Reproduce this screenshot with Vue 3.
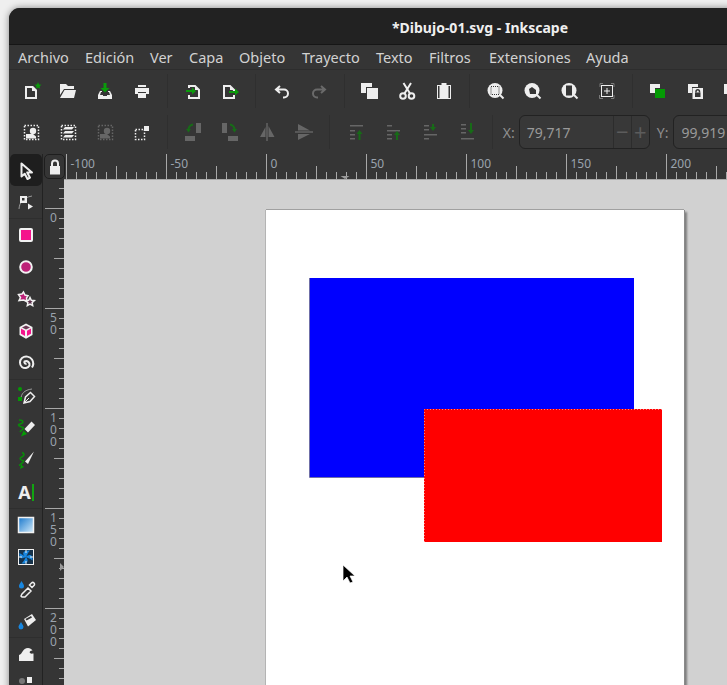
<template>
  <div class="screen">
    <div class="ventana">
      <header class="titulo">*Dibujo-01.svg - Inkscape</header>

      <nav class="menu">
        <span v-for="m in menus" :key="m">{{ m }}</span>
      </nav>

      <!-- barra de comandos -->
      <div class="barra barra-comandos">
        <button class="btn"><svg viewBox="0 0 24 24"><path class="ln" d="M7 8h6l4 4v7H7z"/><path class="bl" d="M13 7h1l4 4v1h-5z"/><path class="gr" d="M19 3l1 2.500 2.500.2-2 1.600.7 2.500-2.200-1.400-2.200 1.400.7-2.500-2-1.600 2.500-.2z"/></svg></button>
        <button class="btn"><svg viewBox="0 0 24 24"><path class="bl" d="M4 5h6l2 2h6v3H8l-4 6z"/><path class="bl" d="M8.500 11H20l-2 8H4z"/></svg></button>
        <button class="btn"><svg viewBox="0 0 24 24"><path class="gr" d="M10.500 4h3v5h3L12 13.500 7.500 9h3z"/><path class="bl" d="M5 16l2-4h2v1H8l-1 3h3v1h4v-1h3l-1-3h-1v-1h2l2 4v4H5z"/></svg></button>
        <button class="btn"><svg viewBox="0 0 24 24"><path class="bl" d="M8 6h8v2H8zM5 9h14v6h-3v-2H8v2H5z"/><path class="bl" d="M8 14h8v5H8z"/></svg></button>
        <i class="sep"></i>
        <button class="btn"><svg viewBox="0 0 24 24"><path class="ln" d="M8 9V7h6l4 4v8H8v-3"/><path class="bl" d="M14 7l4 4h-4z"/><path class="gr" d="M5 11h6V8.500l4 3.500-4 3.500V13H5z"/></svg></button>
        <button class="btn"><svg viewBox="0 0 24 24"><path class="ln" d="M16 12v-1l-4-4H6v12h10v-3"/><path class="bl" d="M12 7l4 4h-4z"/><path class="gr" d="M11 12h6V9.500l4 3.500-4 3.500V14h-6z"/></svg></button>
        <i class="sep"></i>
        <button class="btn"><svg viewBox="0 0 24 24"><path class="ln" d="M10 7l-4 3.500 4 3.500M6.500 10.500H14a4 4 0 0 1 0 8h-1"/></svg></button>
        <button class="btn"><svg viewBox="0 0 24 24"><path class="ln off" d="M14 7l4 3.500-4 3.500M17.500 10.500H10a4 4 0 0 0 0 8h1"/></svg></button>
        <i class="sep"></i>
        <button class="btn"><svg viewBox="0 0 24 24"><path class="bl" d="M3 4h11v4H8v6H3z"/><path class="bl" d="M9 9h11v11H9z"/></svg></button>
        <button class="btn"><svg viewBox="0 0 24 24"><circle class="ln" cx="8" cy="17" r="2.800"/><circle class="ln" cx="16.500" cy="17" r="2.800"/><path class="ln" d="M9.500 14.500L16 4M15 14.500L8.500 4"/></svg></button>
        <button class="btn"><svg viewBox="0 0 24 24"><rect class="ln fino" x="5.500" y="6.500" width="13" height="13"/><path class="bl" d="M9.500 4h5v2H16.500v13h-9V6h2z"/></svg></button>
        <i class="sep"></i>
        <button class="btn"><svg viewBox="0 0 24 24"><path class="ln" d="M16 16l3.500 3.500"/><circle class="bl" cx="11" cy="11.500" r="7.500"/><rect class="punt" x="7" y="7.500" width="8" height="8"/></svg></button>
        <button class="btn"><svg viewBox="0 0 24 24"><path class="ln" d="M16 16l3.500 3.500"/><circle class="bl" cx="11" cy="11.500" r="7.500"/><path class="hueco" d="M8 10l3-2 4 3v4H9z"/></svg></button>
        <button class="btn"><svg viewBox="0 0 24 24"><path class="ln" d="M16 16l3.500 3.500"/><circle class="bl" cx="11" cy="11.500" r="7.500"/><rect class="hueco" x="8" y="6.500" width="6" height="10"/></svg></button>
        <button class="btn"><svg viewBox="0 0 24 24"><path class="fino gris" d="M5 8V4.500h3M16 4.500h3V8M19 16v3.500h-3M8 19.500H4.500V16"/><rect class="ln fino" x="6.500" y="6.500" width="11" height="11"/><path class="ln fino" d="M9 12h6M12 9v6"/></svg></button>
        <i class="sep"></i>
        <button class="btn"><svg viewBox="0 0 24 24"><path class="bl" d="M4 5h10v4H9v5H4z"/><path class="ve" d="M9 10h10v9H9z"/></svg></button>
        <button class="btn"><svg viewBox="0 0 24 24"><path class="bl" d="M5 5h10v3H9v6H5z"/><path class="bl" d="M9.500 9H20v11H9.500z"/><path class="hueco" d="M12 13.500h5.500V18H12z"/><path class="cand" d="M13 13.500v-1a1.700 1.700 0 0 1 3.500 0v1"/></svg></button>
        <button class="btn"><svg viewBox="0 0 24 24"><path class="bl" d="M4 5h10v10H4z"/></svg></button>
      </div>

      <!-- barra de controles del selector -->
      <div class="barra barra-controles">
        <button class="btn"><svg viewBox="0 0 24 24"><rect class="punt bla" x="5.500" y="5.500" width="14" height="14"/><circle class="bl" cx="14" cy="11" r="3.200"/><path class="bl" d="M7 14h7l3 2.500v2H7z"/></svg></button>
        <button class="btn"><svg viewBox="0 0 24 24"><rect class="punt bla" x="5.500" y="5.500" width="14" height="14"/><path class="bl" d="M9 7h9l-2 2.500H7zM9 11h9l-2 2.500H7zM9 15h9l-2 2.500H7z"/></svg></button>
        <button class="btn"><svg viewBox="0 0 24 24"><rect class="punt tenue" x="5.500" y="5.500" width="14" height="14"/><circle class="of" cx="14" cy="11" r="3.200"/><path class="of" d="M7 14h7l3 2.500v2H7z"/></svg></button>
        <button class="btn"><svg viewBox="0 0 24 24"><rect class="punt bla" x="5.500" y="9.500" width="9" height="10"/><path class="bl" d="M14 6h5v5h-5z"/></svg></button>
        <i class="sep"></i>
        <button class="btn"><svg viewBox="0 0 24 24"><path class="of" d="M4 16h10v5H4zM15 3h5v10h-5z"/><path class="vo" d="M12 4.500A5 5 0 0 0 7.500 10"/><path class="vd" d="M5 9h5l-2.500 3.500z"/></svg></button>
        <button class="btn"><svg viewBox="0 0 24 24"><path class="of" d="M10 16h10v5H10zM4 3h5v10H4z"/><path class="vo" d="M12 4.500A5 5 0 0 1 16.500 10"/><path class="vd" d="M14 9h5l-2.500 3.500z"/></svg></button>
        <button class="btn"><svg viewBox="0 0 24 24"><path class="of" d="M10.500 7v10H5zM13.500 6l6 11h-6z"/><path class="fino gris" d="M12 3v18"/></svg></button>
        <button class="btn"><svg viewBox="0 0 24 24"><path class="of" d="M6 4l12 6.500H6zM6 14h12L6 20z"/><path class="fino gris" d="M3 12h18"/></svg></button>
        <i class="sep"></i>
        <button class="btn" v-for="a in alineados" :key="a.flecha"><svg viewBox="0 0 24 24"><path class="of" :d="a.lineas"/><path class="vd" :d="a.flecha"/></svg></button>
        <i class="sep sep-ultima"></i>
        <label class="campo-label">X:</label>
        <div class="spin">
          <span class="spin-valor">79,717</span>
          <span class="spin-boton">−</span>
          <span class="spin-boton">+</span>
        </div>
        <label class="campo-label campo-y">Y:</label>
        <div class="spin spin-y">
          <span class="spin-valor">99,919</span>
        </div>
      </div>

      <div class="cuerpo">
        <!-- caja de herramientas -->
        <aside class="herramientas">
          <button class="tool activa"><svg viewBox="0 0 24 24"><path class="flecha" d="M7.500 5.500v13l3.200-2.800 2.800 5.300 2.500-1.300-2.800-5.200H18z"/></svg></button>
          <button class="tool"><svg viewBox="0 0 24 24"><path class="fino gris2" d="M5 19c.5-6 3-11 13-13"/><path class="bl" d="M6 6h7v7H6z"/><path class="hueco" d="M8 8h2.500v2.500H8z"/><path class="bl" d="M14 13.500l5 3-5 3z"/></svg></button>
          <i class="tool-sep"></i>
          <button class="tool"><svg viewBox="0 0 24 24"><rect class="rosa" x="6" y="6" width="12" height="12" rx="1"/></svg></button>
          <button class="tool"><svg viewBox="0 0 24 24"><circle class="magenta" cx="12" cy="12" r="5.800"/></svg></button>
          <button class="tool"><svg viewBox="0 0 24 24"><path class="magenta fino2" d="M9.500 5l1.500 3 3 .8-1.500 2.200.5 3.500-3.500-1.500-4.500.5 1.500-3-2-3 3.500-.5z"/><path class="estrella" d="M16 10.500l1.300 2.800 3 .3-2.200 2 .6 3-2.700-1.500-2.700 1.500.6-3-2.200-2 3-.3z"/></svg></button>
          <button class="tool"><svg viewBox="0 0 24 24"><path class="cubo" d="M12 4.500l6.500 3.500v8L12 19.800 5.500 16V8z"/><path class="rosa2" d="M7 9.500l4 2.300V17l-4-2.300z"/><path class="rosa2" d="M17 9.500l-4 2.300V17l4-2.300z"/><path class="oscuro" d="M12 6.500L16 8.500 12 10.500 8 8.500z"/></svg></button>
          <button class="tool"><svg viewBox="0 0 24 24"><path class="ln" d="M12.500 12.500a1.500 1.500 0 0 1-2-2 3.500 3.500 0 0 1 5 4 5 5 0 0 1-7.500 1.500A6 6 0 0 1 8 7a7 7 0 0 1 10 1.500 7.500 7.500 0 0 1 0 8"/></svg></button>
          <i class="tool-sep"></i>
          <button class="tool"><svg viewBox="0 0 24 24"><path class="fino gris2" d="M7 15c0-5 3-9 11-10"/><circle class="ve" cx="6" cy="5" r="2"/><path class="ve" d="M4 13h4v4H4z"/><path class="pluma" d="M10 19l1.500-6 5-4.500 4 4-4.500 5z"/><path class="fino bl-l" d="M10.500 18.500L15 14"/></svg></button>
          <button class="tool"><svg viewBox="0 0 24 24"><path class="vo2" d="M5 4c5 0 5 3 1 4s1 3 3 3.500-2 3-3 4.500"/><path class="bl" d="M10.500 13l7-7.500 3.500 3.500-7 7.500z"/><path class="ve" d="M9.500 14.500l3.500 3.500-6 2.500z"/></svg></button>
          <button class="tool"><svg viewBox="0 0 24 24"><path class="vo2" d="M8 4.500c4 2 1 4-1 5s0 3 2 3-2 4-4 5"/><path class="bl" d="M11 13.500L20 3.500l-6 12.500z"/><path class="ve" d="M7 16.500l3 2.500-4 2z"/></svg></button>
          <button class="tool tool-texto"><span class="letra">A</span><i class="caret"></i></button>
          <i class="tool-sep"></i>
          <button class="tool"><svg viewBox="0 0 24 24"><defs><linearGradient id="degradado" x1="0" y1="0" x2="1" y2="1"><stop offset="0" stop-color="#1877cc"/><stop offset="1" stop-color="#d4ecfa"/></linearGradient></defs><rect class="marco" x="4.500" y="4.500" width="15" height="15" fill="url(#degradado)"/></svg></button>
          <button class="tool"><svg viewBox="0 0 24 24"><rect class="marcoM" x="4.500" y="4.500" width="15" height="15"/><path class="azul" d="M12 12C7 9 9 5 16 5.500c-2 2-3 4.500-4 6.500zM12 12c3-3 7-3 6.500 3.500-2-2-4.500-2.500-6.500-3.500zM12 12c3 4 2 7-4.500 6.500 2-2 3.500-4.500 4.500-6.500zM12 12c-4 2-7 2-6.500-4 2 1 4.500 3 6.500 4z"/><path class="fino bl-l" d="M12 4.500V8M12 16v3.500M4.500 12H8M16 12h3.500"/></svg></button>
          <button class="tool"><svg viewBox="0 0 24 24"><path class="azul" d="M7.500 4c1.500 2.500 2.500 3.500 2.500 5a2.500 2.500 0 0 1-5 0c0-1.500 1-2.500 2.500-5z"/><path class="gotero" d="M8 20l-1-1 1-2 6-6 3 3-6 6zM15.500 8l2-2a1.500 1.500 0 0 1 2.500 2.500l-2 2z"/></svg></button>
          <button class="tool"><svg viewBox="0 0 24 24"><path class="azul" d="M7 13c1.500 2.500 2.500 3.500 2.500 5a2.500 2.500 0 0 1-5 0c0-1.500 1-2.500 2.500-5z"/><path class="bl" d="M10 10l8-5 4 6-8 6.500z"/><path class="hueco" d="M11.500 10l5.500-3 1 1.500-5.500 3z"/></svg></button>
          <i class="tool-sep"></i>
          <button class="tool"><svg viewBox="0 0 24 24"><path class="bl" d="M5 13c3.500-.5 3.500-7 9-7 2 0 3.500 1 4.500 2.500-2.500 0-3.500 1.500-2.500 2.500s2.500.5 3.500.5v7.500H5z"/></svg></button>
          <button class="tool"><svg viewBox="0 0 24 24"><circle class="gris3" cx="8" cy="7" r="3"/><path class="bl" d="M13 3h5v6h-5z"/></svg></button>
        </aside>

        <div class="trabajo">
          <!-- reglas -->
          <div class="reglas-top">
            <div class="candado"><svg viewBox="0 0 16 20"><path class="cand2" d="M5 9V6.500a3 3 0 0 1 6 0V9"/><path class="bl" d="M3 9h10v8.500H3z"/></svg></div>
            <svg class="regla-h" width="663" height="25">
              <path class="regla-linea" :d="marcasH"/>
              <text v-for="t in etiquetasH" :key="t.n" class="regla-txt" :x="t.x" y="14">{{ t.n }}</text>
              <path class="regla-marca" d="M281 25l4.500-3h-9z"/>
            </svg>
          </div>
          <div class="zona">
            <svg class="regla-v" width="21" height="506">
              <path class="regla-linea" :d="marcasV"/>
              <template v-for="t in etiquetasV" :key="t.y">
                <text v-for="(d, i) in t.n" :key="i" class="regla-txt" x="7" :y="t.y + 14 + i * 12">{{ d }}</text>
              </template>
              <path class="regla-marca" d="M21 388l-4-4v8z"/>
            </svg>
            <main class="lienzo">
              <div class="pagina">
                <svg width="418" height="480">
                  <rect x="43" y="68" width="325" height="199" fill="#0000ff"/>
                  <path d="M43.500 68V267.500H158" fill="none" stroke="#6f6fa8"/>
                  <rect x="158" y="199" width="238" height="133" fill="#ff0000"/>
                  <path d="M158.500 332V199.500H396" fill="none" stroke="#ff7f7f" stroke-dasharray="1 2"/>
                </svg>
              </div>
              <svg class="cursor" width="16" height="22" viewBox="0 0 16 22"><path d="M2 1v16l4-4 3 6 3-1-3-6h5z" fill="#000" stroke="#fff" stroke-opacity=".7"/></svg>
            </main>
          </div>
        </div>
      </div>
    </div>
  </div>
</template>

<script setup>
const menus = ["Archivo", "Edición", "Ver", "Capa", "Objeto", "Trayecto", "Texto", "Filtros", "Extensiones", "Ayuda"];

const alineados = [
  { lineas: "M6 5h13v1.500H6zM6 10h5v1.500H6zM6 14h5v1.500H6zM6 18h5v1.500H6z", flecha: "M14.500 20v-6h-2l3-4 3 4h-2v6z" },
  { lineas: "M6 5h5v1.500H6zM6 10h13v1.500H6zM6 14h5v1.500H6zM6 18h5v1.500H6z", flecha: "M15 20v-5h-2l3-4 3 4h-2v5z" },
  { lineas: "M6 5h5v1.500H6zM6 9h5v1.500H6zM6 14h13v1.500H6zM6 18h5v1.500H6z", flecha: "M14 4h2v3h2l-3 4-3-4h2z" },
  { lineas: "M6 4h5v1.500H6zM6 8h5v1.500H6zM6 12h5v1.500H6zM6 18h13v1.500H6z", flecha: "M15 3h2v7h2l-3 4-3-4h2z" },
];

// regla horizontal: 2px por unidad, marca cada 10px
const origenH = 2.5;
let h = "";
for (let i = 0; i * 10 + origenH < 663; i++) {
  const x = i * 10 + origenH;
  const largo = i % 10 === 0 ? 25 : i % 5 === 0 ? 13 : 7;
  h += `M${x} ${25 - largo}V25`;
}
const marcasH = h;
const etiquetasH = [-100, -50, 0, 50, 100, 150, 200].map((n, i) => ({ n: String(n), x: origenH + i * 100 + 4 }));

// regla vertical
let v = "";
for (let y = 208.5 - 179 - 30; y < 506; y += 10) {
  const paso = Math.round(y - 29.5);
  const largo = paso % 100 === 0 ? 19 : paso % 50 === 0 ? 10 : 5;
  v += `M${21 - largo} ${y}H21`;
}
const marcasV = v;
const etiquetasV = [0, 50, 100, 150, 200].map((n, i) => ({ n: String(n), y: 29 + i * 100 }));
</script>

<style scoped>
.screen {
  width: 727px;
  height: 685px;
  overflow: hidden;
  background: #efefef;
  padding: 8px 0 0 9px;
  box-sizing: border-box;
  font-family: "Noto Sans", "Open Sans", sans-serif;
}

.ventana {
  width: 760px;
  height: 700px;
  background: #353535;
  border-radius: 11px 11px 0 0;
  box-shadow: 0 0 7px rgba(0, 0, 0, 0.45);
  overflow: hidden;
}

.titulo {
  height: 36px;
  line-height: 39px;
  background: #222;
  border-bottom: 1px solid #161616;
  color: #efefef;
  font-size: 14px;
  font-weight: 700;
  padding-left: 383px;
}

.menu {
  height: 24px;
  display: grid;
  grid-template-columns: 67px 65px 39px 50px 63px 74px 53px 60px 97px auto;
  padding-left: 9px;
  align-items: center;
  border-bottom: 1px solid #2d2d2d;
  color: #d2d2d2;
  font-size: 14.5px;
}

.barra {
  display: flex;
  align-items: center;
  padding-left: 3px;
}

.barra-comandos {
  height: 40px;
  padding-top: 2px;
  box-sizing: border-box;
  border-bottom: 0;
}

.barra-controles {
  height: 44px;
}

.btn {
  flex: none;
  width: 37px;
  height: 24px;
  padding: 0;
  border: 0;
  background: none;
  display: flex;
  justify-content: center;
}

.btn svg,
.tool svg {
  width: 24px;
  height: 24px;
}

.sep {
  flex: none;
  width: 1px;
  height: 34px;
  margin: 0 6.75px;
  background: #2f2f2f;
}

.sep-ultima {
  margin-right: 10px;
}

.campo-label {
  color: #8f8f8f;
  font-size: 14px;
  margin-right: 4px;
}

.campo-y {
  margin-left: 7px;
  margin-right: 5px;
}

.spin {
  flex: none;
  width: 131px;
  height: 34px;
  box-sizing: border-box;
  border: 1px solid #222;
  border-radius: 6px;
  background: #383838;
  display: flex;
  align-items: center;
  color: #9a9a9a;
  font-size: 14px;
}

.spin-y {
  width: 100px;
}

.spin-valor {
  flex: 1;
  padding-left: 7px;
}

.spin-boton {
  width: 17px;
  height: 32px;
  line-height: 30px;
  text-align: center;
  border-left: 1px solid #2c2c2c;
  color: #5c5c5c;
  font-size: 22px;
}

.cuerpo {
  display: flex;
  height: 560px;
}

.herramientas {
  flex: none;
  width: 33px;
  border-right: 1px solid #222;
  display: flex;
  flex-direction: column;
}

.tool {
  flex: none;
  width: 32px;
  height: 32px;
  margin-left: 1px;
  padding: 0;
  border: 0;
  background: none;
  display: flex;
  align-items: center;
  justify-content: center;
}

.activa {
  background: #1e1e1e;
  border-radius: 5px;
}

.tool-sep {
  flex: none;
  height: 1px;
  background: #2e2e2e;
}

.tool-texto {
  gap: 1px;
}

.letra {
  color: #eee;
  font-size: 18px;
  font-weight: 700;
  font-family: "Noto Sans", sans-serif;
}

.caret {
  width: 2px;
  height: 17px;
  background: #11a511;
}

.trabajo {
  flex: 1;
  display: flex;
  flex-direction: column;
}

.reglas-top {
  display: flex;
  height: 25px;
}

.candado {
  flex: none;
  width: 21px;
  height: 25px;
  box-sizing: border-box;
  margin-left: 1px;
  border: 1px solid #1e1e1e;
  border-radius: 5px;
  display: flex;
  align-items: center;
  justify-content: center;
}

.candado svg {
  width: 16px;
  height: 20px;
}

.regla-h {
  display: block;
  flex: none;
  margin-left: -1px;
}

.zona {
  flex: 1;
  display: flex;
}

.regla-v {
  display: block;
  flex: none;
}

.regla-linea {
  fill: none;
  stroke: #a8a8a8;
  stroke-width: 1;
}

.regla-txt {
  fill: #9aa3ad;
  font-size: 12px;
  font-family: "Noto Sans", sans-serif;
}

.regla-marca {
  fill: #9a9a9a;
}

.lienzo {
  flex: 1;
  position: relative;
  background: #d1d1d1;
  border-top: 1px solid #a9a9a9;
  overflow: hidden;
}

.pagina {
  position: absolute;
  left: 202px;
  top: 30px;
  width: 418px;
  height: 480px;
  background: #fff;
  box-shadow: 0 -1px 0 #a0a0a0, -1px 0 0 #b4b4b4, 1px 0 0 #8a8a8a, 3px 2px 2px rgba(0, 0, 0, 0.4);
}

.pagina svg {
  display: block;
}

.cursor {
  position: absolute;
  left: 277px;
  top: 384px;
}

/* trazos de los iconos */
.ln { fill: none; stroke: #eee; stroke-width: 2; }
.ln.off { stroke: #6a6a6a; }
.fino { fill: none; stroke-width: 1; }
.ln.fino { stroke-width: 1; }
.gris { stroke: #7a7a7a; }
.gris2 { stroke: #9a9a9a; }
.gris3 { fill: #777; }
.bl { fill: #eee; }
.bl-l { stroke: #eee; }
.gr { fill: #0a9a0a; }
.ve { fill: #049a04; }
.of { fill: #666; }
.vo { fill: none; stroke: #176b17; stroke-width: 2; }
.vo2 { fill: none; stroke: #0a8a0a; stroke-width: 1.6; }
.vd { fill: #176b17; }
.hueco { fill: #353535; }
.cand { fill: none; stroke: #353535; stroke-width: 1.500; }
.punt { fill: none; stroke: #353535; stroke-width: 1; stroke-dasharray: 1 1; }
.punt.bla { stroke: #eee; stroke-width: 1.500; stroke-dasharray: 1.500 1.500; }
.punt.tenue { stroke: #666; stroke-width: 1.500; stroke-dasharray: 1.500 1.500; }
.flecha { fill: #1e1e1e; stroke: #eee; stroke-width: 2; stroke-linejoin: round; }
.rosa { fill: #f5148c; stroke: #f2f2f2; stroke-width: 2; }
.rosa2 { fill: #f5148c; }
.magenta { fill: #bd2278; stroke: #f2f2f2; stroke-width: 2; }
.fino2 { stroke-width: 1.500; }
.estrella { fill: #5a2f4a; stroke: #f2f2f2; stroke-width: 1.500; }
.cubo { fill: #f2f2f2; }
.oscuro { fill: #6b3a55; }
.pluma { fill: #353535; stroke: #eee; stroke-width: 1.500; }
.marco { stroke: #f2f2f2; stroke-width: 1.500; }
.marcoM { fill: #16324a; stroke: #f2f2f2; stroke-width: 1; }
.azul { fill: #1887e0; }
.gotero { fill: #353535; stroke: #eee; stroke-width: 1.500; }
.cand2 { fill: none; stroke: #eee; stroke-width: 2; }
</style>

<style>
body {
  margin: 0;
}
</style>
